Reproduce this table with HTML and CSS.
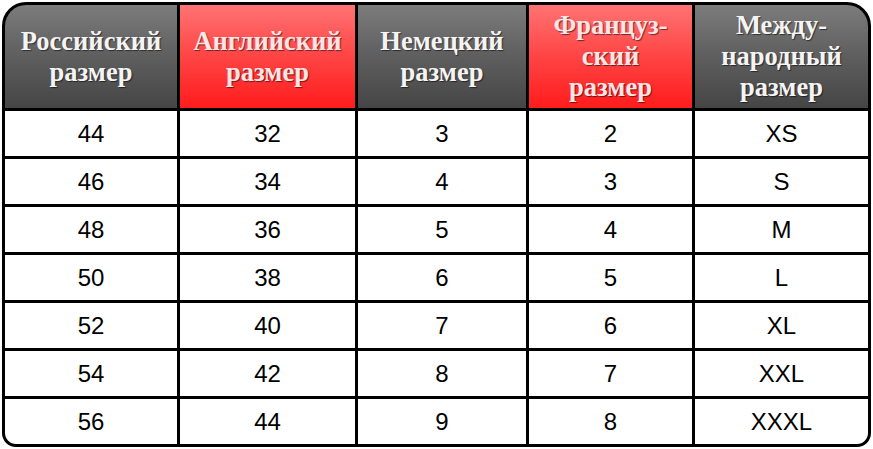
FILE: index.html
```html
<!DOCTYPE html>
<html lang="ru">
<head>
<meta charset="utf-8">
<title>Таблица размеров</title>
<link rel="stylesheet" href="styles.css">
</head>
<body>
<div class="table">
  <div class="hd gray">Российский<br>размер</div>
  <div class="hd red">Английский<br>размер</div>
  <div class="hd gray">Немецкий<br>размер</div>
  <div class="hd red">Француз-<br>ский<br>размер</div>
  <div class="hd gray">Между-<br>народный<br>размер</div>

  <div class="cell">44</div><div class="cell">32</div><div class="cell">3</div><div class="cell">2</div><div class="cell">XS</div>
  <div class="cell">46</div><div class="cell">34</div><div class="cell">4</div><div class="cell">3</div><div class="cell">S</div>
  <div class="cell">48</div><div class="cell">36</div><div class="cell">5</div><div class="cell">4</div><div class="cell">M</div>
  <div class="cell">50</div><div class="cell">38</div><div class="cell">6</div><div class="cell">5</div><div class="cell">L</div>
  <div class="cell">52</div><div class="cell">40</div><div class="cell">7</div><div class="cell">6</div><div class="cell">XL</div>
  <div class="cell">54</div><div class="cell">42</div><div class="cell">8</div><div class="cell">7</div><div class="cell">XXL</div>
  <div class="cell">56</div><div class="cell">44</div><div class="cell">9</div><div class="cell">8</div><div class="cell">XXXL</div>
</div>
</body>
</html>
```
FILE: styles.css
```css
html, body {
  margin: 0;
  padding: 0;
  background: #ffffff;
}
body {
  padding: 2px 0 0 2px;
}
.table {
  width: 863px;
  height: 439px;
  border: 3px solid #000;
  border-radius: 24px 24px 14px 14px;
  overflow: hidden;
  background: #000;
  display: grid;
  grid-template-columns: 172px 175px 168px 163px 173px;
  grid-template-rows: 103px repeat(7, 45px);
  column-gap: 3px;
  row-gap: 3px;
}
.hd {
  display: flex;
  align-items: center;
  justify-content: center;
  text-align: center;
  font-family: "Liberation Serif", "Times New Roman", serif;
  font-weight: bold;
  font-size: 26.5px;
  line-height: 31px;
  color: #f4f4f4;
  text-shadow: 1px 1px 1px rgba(0, 0, 0, 0.55);
}
.gray {
  background: linear-gradient(to bottom, #7c7c7c 0%, #5e5e5e 50%, #454545 100%);
}
.red {
  background: linear-gradient(to bottom, #ff7373 0%, #ff4444 50%, #ff1c1c 100%);
  color: #ffe6e6;
}
.cell {
  background: #fff;
  display: flex;
  align-items: center;
  justify-content: center;
  font-family: "Liberation Sans", Arial, sans-serif;
  font-size: 24px;
  color: #000;
  padding-top: 1px;
}
```
